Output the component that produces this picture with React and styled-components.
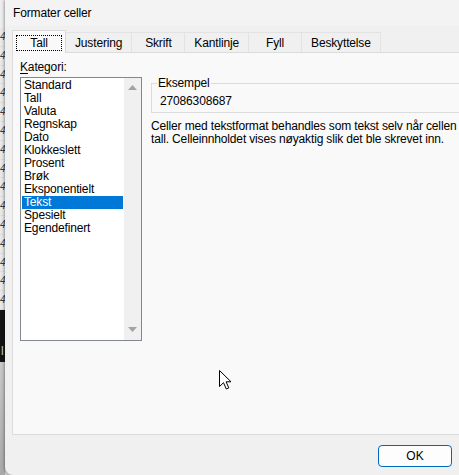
import styled, { createGlobalStyle } from "styled-components";

const GlobalStyle = createGlobalStyle`
  html, body {
    margin: 0;
    padding: 0;
    width: 459px;
    height: 475px;
    overflow: hidden;
    background: #d6d6d6;
  }
  body {
    font-family: "Liberation Sans", Arial, sans-serif;
    font-size: 12px;
    letter-spacing: -0.15px;
    color: #000;
  }
`;

const categories = [
  "Standard",
  "Tall",
  "Valuta",
  "Regnskap",
  "Dato",
  "Klokkeslett",
  "Prosent",
  "Brøk",
  "Eksponentielt",
  "Tekst",
  "Spesielt",
  "Egendefinert",
];

const tabs = ["Tall", "Justering", "Skrift", "Kantlinje", "Fyll", "Beskyttelse"];

function App() {
  return (
    <>
      <GlobalStyle />
      <Screen>
        <Sheet>
          <SheetHead />
          {Array.from({ length: 15 }).map((_, i) => (
            <SheetRow key={i}>4</SheetRow>
          ))}
          <SheetDark>
            <span>l</span>
          </SheetDark>
          <SheetShade />
        </Sheet>

        <Dialog>
          <TitleBar>Formater celler</TitleBar>
          <Body>
            <TabStrip>
              {tabs.map((t, i) => (
                <Tab key={t} $active={i === 0}>
                  <TabLabel $focused={i === 0}>{t}</TabLabel>
                </Tab>
              ))}
            </TabStrip>
            <Panel>
              <FieldLabel>
                <u>K</u>ategori:
              </FieldLabel>
              <span />
              <ListBox>
                <ListItems>
                  {categories.map((c) => (
                    <ListItem key={c} $selected={c === "Tekst"}>
                      {c}
                    </ListItem>
                  ))}
                </ListItems>
                <ScrollBar>
                  <Arrow viewBox="0 0 9 5">
                    <polygon points="0,5 4.5,0 9,5" />
                  </Arrow>
                  <Arrow viewBox="0 0 9 5">
                    <polygon points="0,0 9,0 4.5,5" />
                  </Arrow>
                </ScrollBar>
              </ListBox>
              <Details>
                <Group>
                  <Legend>Eksempel</Legend>
                  <SampleValue>27086308687</SampleValue>
                </Group>
                <Description>
                  Celler med tekstformat behandles som tekst selv når cellen inneholder et
                  <br />
                  tall. Celleinnholdet vises nøyaktig slik det ble skrevet inn.
                </Description>
              </Details>
            </Panel>
          </Body>
          <Footer>
            <Button $default>OK</Button>
          </Footer>
        </Dialog>

        <Cursor viewBox="0 0 13 20">
          <path d="M0.5 0.5 L0.5 16.5 L4.5 12.7 L7.3 19 L9.8 17.9 L7.1 11.8 L12 11.8 Z" />
        </Cursor>
      </Screen>
    </>
  );
}

const Screen = styled.div`
  position: relative;
  display: flex;
  width: 459px;
  height: 475px;
  overflow: hidden;
`;

// Excel sheet peeking out behind the dialog
const Sheet = styled.div`
  width: 5px;
  flex-shrink: 0;
  display: flex;
  flex-direction: column;
  background: #e9e9e9;
  overflow: hidden;
`;

const SheetHead = styled.div`
  height: 28px;
  background: #eeeeee;
`;

const SheetRow = styled.div`
  height: 18.8px;
  line-height: 18.8px;
  font-size: 10px;
  letter-spacing: 0;
  color: #3a3a3a;
  border-bottom: 1px solid #dedede;
  box-sizing: border-box;
  font-style: italic;
`;

const SheetDark = styled.div`
  height: 52px;
  background: #141414;
  display: flex;
  align-items: flex-end;
  padding-bottom: 4px;
  box-sizing: border-box;
  color: #cfcfcf;
  font-size: 12px;
  padding-left: 1px;
`;

const SheetShade = styled.div`
  flex: 1;
  background: linear-gradient(#c9c9c9, #a9a9a9);
`;

const Dialog = styled.div`
  width: 537px;
  flex-shrink: 0;
  height: 475px;
  display: flex;
  flex-direction: column;
  background: #f0f0f0;
  border-radius: 0 0 0 8px;
  box-shadow: -1px 0 3px rgba(0, 0, 0, 0.35);
  position: relative;
`;

const TitleBar = styled.div`
  height: 26px;
  display: flex;
  align-items: center;
  padding-left: 8px;
  background: #f3f3f3;
  font-size: 12px;
`;

const Body = styled.div`
  display: flex;
  flex-direction: column;
  padding: 4px 0 0 7px;
`;

const TabStrip = styled.div`
  display: flex;
  align-items: flex-end;
  height: 22px;
`;

const Tab = styled.div`
  box-sizing: border-box;
  position: relative;
  z-index: ${(p) => (p.$active ? 1 : 0)};
  height: ${(p) => (p.$active ? 23 : 20)}px;
  margin-bottom: ${(p) => (p.$active ? -1 : 0)}px;
  min-width: 54px;
  padding: 0 ${(p) => (p.$active ? 3 : 9)}px;
  display: flex;
  align-items: center;
  justify-content: center;
  background: ${(p) => (p.$active ? "#f9f9f9" : "#f0f0f0")};
  border: 1px solid ${(p) => (p.$active ? "#d9d9d9" : "#e3e3e3")};
  border-bottom: none;
  margin-right: -1px;
`;

const TabLabel = styled.span`
  box-sizing: border-box;
  display: flex;
  align-items: center;
  justify-content: center;
  ${(p) =>
    p.$focused &&
    `
    width: 46px;
    height: 16px;
    outline: 1px dotted #000;
    outline-offset: -1px;
    margin-top: 1px;
  `}
`;

const Panel = styled.div`
  box-sizing: border-box;
  height: 383px;
  border: 1px solid #dcdcdc;
  background: #f9f9f9;
  padding: 7px 0 0 7px;
  display: grid;
  grid-template-columns: 122px 1fr;
  grid-template-rows: 15px auto;
  column-gap: 9px;
  row-gap: 2px;
  align-content: start;
`;

const FieldLabel = styled.div`
  line-height: 15px;
  u {
    text-decoration-thickness: 1px;
    text-underline-offset: 2px;
  }
`;

const ListBox = styled.div`
  box-sizing: border-box;
  width: 122px;
  height: 264px;
  border: 1px solid #828790;
  background: #fff;
  display: flex;
`;

const ListItems = styled.div`
  flex: 1;
  padding: 1px;
`;

const ListItem = styled.div`
  height: 13px;
  line-height: 13px;
  padding-left: 2px;
  white-space: nowrap;
  background: ${(p) => (p.$selected ? "#0078d7" : "transparent")};
  color: ${(p) => (p.$selected ? "#fff" : "#000")};
`;

const ScrollBar = styled.div`
  width: 17px;
  background: #f0f0f0;
  display: flex;
  flex-direction: column;
  justify-content: space-between;
  align-items: center;
  padding: 7px 0 8px;
  box-sizing: border-box;
`;

const Arrow = styled.svg`
  width: 9px;
  height: 5px;
  fill: #a3a3a3;
`;

const Details = styled.div`
  width: 380px;
  display: flex;
  flex-direction: column;
`;

const Group = styled.fieldset`
  margin: 0;
  padding: 5px 8px 4px;
  border: 1px solid #dcdcdc;
  min-width: 0;
`;

const Legend = styled.legend`
  padding: 0 1px;
  margin-left: -3px;
  line-height: 13px;
`;

const SampleValue = styled.div`
  line-height: 13px;
`;

const Description = styled.p`
  margin: 7px 0 0;
  line-height: 13px;
  white-space: nowrap;
`;

const Footer = styled.div`
  flex: 1;
  display: flex;
  justify-content: flex-end;
  align-items: flex-start;
  padding: 10px 90px 0 0;
`;

const Button = styled.button`
  box-sizing: border-box;
  width: 74px;
  height: 22px;
  font-family: inherit;
  font-size: 12px;
  color: #000;
  background: #fdfdfd;
  border: 1px solid ${(p) => (p.$default ? "#0067c0" : "#d0d0d0")};
  border-radius: 4px;
  padding: 0;
`;

const Cursor = styled.svg`
  position: absolute;
  left: 219px;
  top: 370px;
  width: 13px;
  height: 20px;
  fill: #fff;
  stroke: #000;
  stroke-width: 1;
  stroke-linejoin: miter;
`;

export default App;
